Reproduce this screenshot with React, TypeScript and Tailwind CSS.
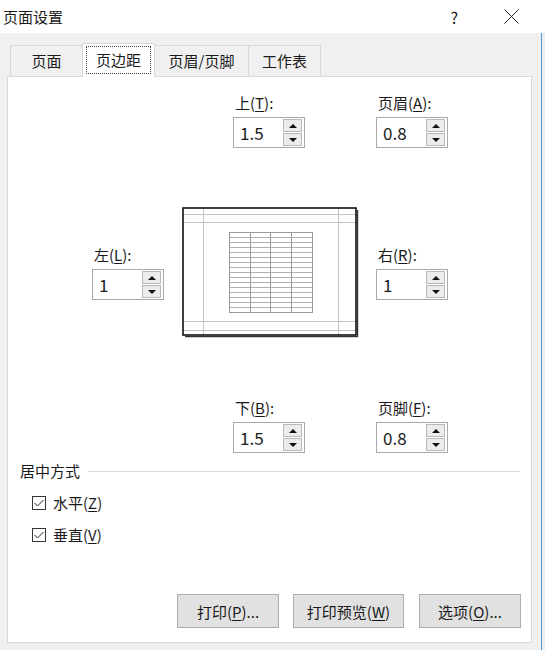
import React from "react";

const FONT = "font-['Noto_Sans_CJK_SC','Noto_Sans',sans-serif]";

function Label({ pre, u, post }: { pre: string; u: string; post: string }) {
  return (
    <span>
      {pre}
      <span className="underline underline-offset-2 decoration-1">{u}</span>
      {post}
    </span>
  );
}

function Tri({ up }: { up: boolean }) {
  return up ? (
    <div className="w-0 h-0 border-l-[4px] border-r-[4px] border-b-[4px] border-l-transparent border-r-transparent border-b-[#111]" />
  ) : (
    <div className="w-0 h-0 border-l-[4px] border-r-[4px] border-t-[4px] border-l-transparent border-r-transparent border-t-[#111]" />
  );
}

function Spin({ pre, u, post, value }: { pre: string; u: string; post: string; value: string }) {
  return (
    <div className="flex flex-col w-[72px]">
      <div className="h-[20px] leading-[20px] text-[15px] pl-[2px]">
        <Label pre={pre} u={u} post={post} />
      </div>
      <div className="mt-[4px] h-[31px] border border-[#a9a9a9] bg-white flex">
        <div className="flex-1 flex items-center pl-[6px] text-[17px] leading-none">{value}</div>
        <div className="w-[19px] my-px mr-[2px] flex flex-col gap-px">
          <div className="flex-1 border border-[#b8b8b8] bg-[#ececec] flex items-center justify-center">
            <Tri up />
          </div>
          <div className="flex-1 border border-[#b8b8b8] bg-[#ececec] flex items-center justify-center">
            <Tri up={false} />
          </div>
        </div>
      </div>
    </div>
  );
}

function Preview() {
  const rows = [];
  for (let i = 1; i < 16; i++) {
    const y = 25.5 + i * 5;
    rows.push(<line key={i} x1={47.5} y1={y} x2={130.5} y2={y} />);
  }
  return (
    <svg width="177" height="131" viewBox="0 0 177 131" className="shrink-0">
      <rect x="0" y="0" width="177" height="131" fill="white" />
      <g stroke="#c4c4c4" strokeWidth="1">
        <line x1="21.5" y1="1" x2="21.5" y2="129" />
        <line x1="156.5" y1="1" x2="156.5" y2="129" />
        <line x1="1" y1="7.5" x2="175" y2="7.5" />
        <line x1="1" y1="15.5" x2="175" y2="15.5" />
        <line x1="1" y1="114.5" x2="175" y2="114.5" />
        <line x1="1" y1="123.5" x2="175" y2="123.5" />
      </g>
      <g stroke="#b0b0b0" strokeWidth="1">{rows}</g>
      <g stroke="#9a9a9a" strokeWidth="1" fill="none">
        <rect x="47.5" y="25.5" width="83" height="80" />
        <line x1="68.5" y1="25.5" x2="68.5" y2="105.5" />
        <line x1="88.5" y1="25.5" x2="88.5" y2="105.5" />
        <line x1="109.5" y1="25.5" x2="109.5" y2="105.5" />
      </g>
      <rect x="1" y="1" width="173" height="127" fill="none" stroke="#111" strokeWidth="1.6" />
      <line x1="175.5" y1="3" x2="175.5" y2="130" stroke="#333" strokeWidth="1.4" />
      <line x1="3" y1="129.6" x2="176" y2="129.6" stroke="#333" strokeWidth="1.4" />
    </svg>
  );
}

function Check() {
  return (
    <div className="w-[14px] h-[14px] border border-[#333] bg-white flex items-center justify-center shrink-0">
      <svg width="12" height="12" viewBox="0 0 12 12">
        <polyline points="1.5,6 4.5,9 10.5,3" fill="none" stroke="#222" strokeWidth="1" />
      </svg>
    </div>
  );
}

function Btn({ children, w }: { children: React.ReactNode; w: string }) {
  return (
    <div
      className={`${w} h-[34px] border border-[#adadad] bg-[#e1e1e1] flex items-center justify-center text-[15px] leading-none`}
    >
      {children}
    </div>
  );
}

export default function App() {
  return (
    <div className={`w-[545px] h-[650px] bg-[#f0f0f0] flex flex-col overflow-hidden text-[#1a1a1a] ${FONT}`}>
      {/* title bar */}
      <div className="h-[33px] bg-white flex items-center shrink-0">
        <span className="pl-[3px] text-[15px] leading-none">页面设置</span>
        <span className="ml-auto text-[16px] leading-none">?</span>
        <svg width="15" height="15" viewBox="0 0 15 15" className="ml-[46px] mr-[26px]">
          <line x1="0.5" y1="0.5" x2="14.5" y2="14.5" stroke="#222" strokeWidth="1" />
          <line x1="14.5" y1="0.5" x2="0.5" y2="14.5" stroke="#222" strokeWidth="1" />
        </svg>
      </div>

      <div className="flex flex-1">
        <div className="w-[541px] flex flex-col pl-[7px] pt-[10px]">
          {/* tabs */}
          <div className="h-[34px] -mb-px flex items-end pl-[3px] relative z-10 text-[15px]">
            <div className="w-[72px] h-[31px] mb-px border-t border-l border-[#d9d9d9] flex items-center justify-center">
              页面
            </div>
            <div className="w-[73px] h-[34px] border-t border-l border-r border-[#d9d9d9] bg-white px-[3px] pt-[2px] pb-[3px] flex">
              <div className="flex-1 border border-dotted border-[#444] flex items-center justify-center">页边距</div>
            </div>
            <div className="w-[93px] h-[31px] mb-px border-t border-[#d9d9d9] flex items-center justify-center">
              页眉/页脚
            </div>
            <div className="w-[73px] h-[31px] mb-px border-t border-l border-r border-[#d9d9d9] flex items-center justify-center">
              工作表
            </div>
          </div>

          {/* panel */}
          <div className="w-[525px] h-[567px] border border-[#d9d9d9] bg-white flex flex-col">
            <div className="pt-[16px] pl-[225px] flex gap-[71px]">
              <Spin pre="上(" u="T" post="):" value="1.5" />
              <Spin pre="页眉(" u="A" post="):" value="0.8" />
            </div>

            <div className="mt-[59px] pl-[84px] flex items-center">
              <Spin pre="左(" u="L" post="):" value="1" />
              <div className="ml-[18px] mr-[17px] flex">
                <Preview />
              </div>
              <Spin pre="右(" u="R" post="):" value="1" />
            </div>

            <div className="mt-[60px] pl-[225px] flex gap-[71px]">
              <Spin pre="下(" u="B" post="):" value="1.5" />
              <Spin pre="页脚(" u="F" post="):" value="0.8" />
            </div>

            <div className="mt-[8px] h-[20px] pl-[12px] pr-[11px] flex items-center text-[15px]">
              <span>居中方式</span>
              <div className="flex-1 ml-[8px] h-px bg-[#dcdcdc]" />
            </div>

            <div className="mt-[12px] h-[20px] pl-[24px] flex items-center gap-[7px] text-[15px]">
              <Check />
              <Label pre="水平(" u="Z" post=")" />
            </div>
            <div className="mt-[12px] h-[20px] pl-[24px] flex items-center gap-[7px] text-[15px]">
              <Check />
              <Label pre="垂直(" u="V" post=")" />
            </div>

            <div className="mt-[49px] pr-[10px] flex justify-end">
              <Btn w="w-[102px]">
                <Label pre="打印(" u="P" post=")..." />
              </Btn>
              <div className="ml-[14px]">
                <Btn w="w-[111px]">
                  <Label pre="打印预览(" u="W" post=")" />
                </Btn>
              </div>
              <div className="ml-[15px]">
                <Btn w="w-[102px]">
                  <Label pre="选项(" u="O" post=")..." />
                </Btn>
              </div>
            </div>
          </div>
        </div>
        <div className="w-px bg-[#4a9ee0]" />
        <div className="flex-1 bg-[#ececec]" />
      </div>
    </div>
  );
}
